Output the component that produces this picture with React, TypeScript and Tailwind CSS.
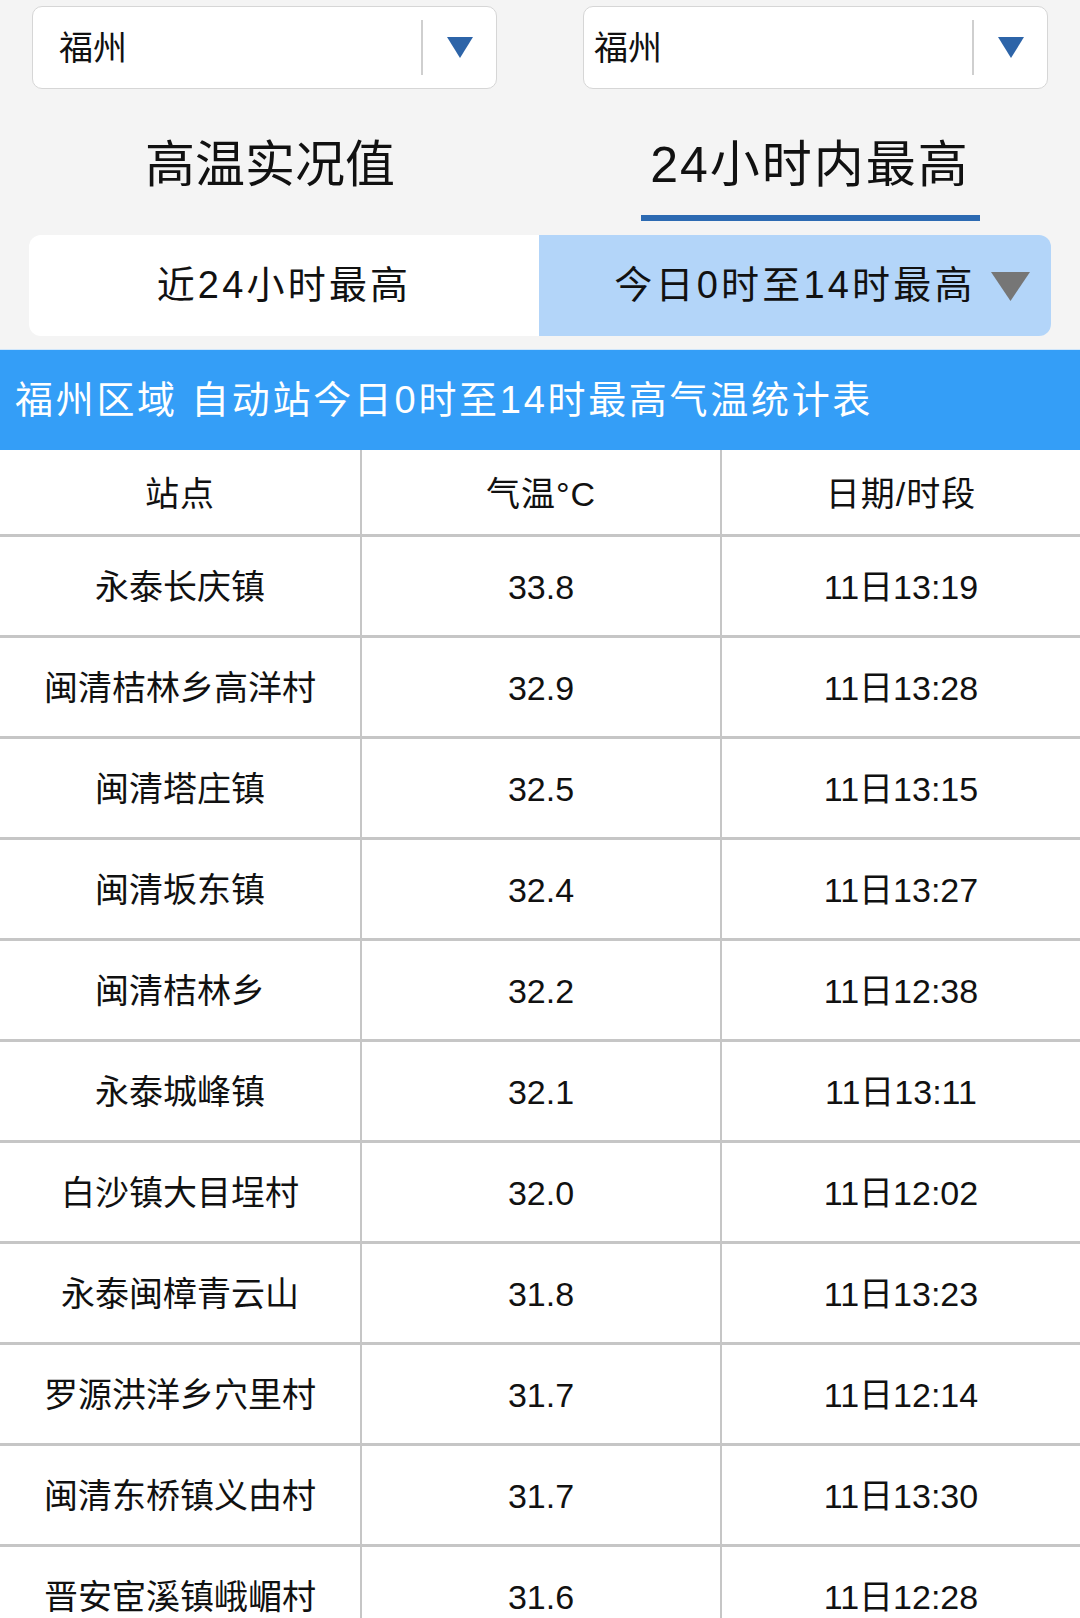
const rows: [string, string, string][] = [
  ["永泰长庆镇", "33.8", "11日13:19"],
  ["闽清桔林乡高洋村", "32.9", "11日13:28"],
  ["闽清塔庄镇", "32.5", "11日13:15"],
  ["闽清坂东镇", "32.4", "11日13:27"],
  ["闽清桔林乡", "32.2", "11日12:38"],
  ["永泰城峰镇", "32.1", "11日13:11"],
  ["白沙镇大目埕村", "32.0", "11日12:02"],
  ["永泰闽樟青云山", "31.8", "11日13:23"],
  ["罗源洪洋乡穴里村", "31.7", "11日12:14"],
  ["闽清东桥镇义由村", "31.7", "11日13:30"],
  ["晋安宦溪镇峨嵋村", "31.6", "11日12:28"],
];

function CitySelect({ pad }: { pad: string }) {
  return (
    <div className="flex h-[83px] w-[465px] items-center rounded-[10px] border border-[#d6d6d6] bg-white">
      <div className={["flex-1 text-[34px] leading-none text-[#111]", pad].join(" ")}>福州</div>
      <div className="h-[55px] w-[2px] bg-[#cfcfcf]" />
      <div className="flex w-[73px] items-center justify-center">
        <svg width="26" height="21" viewBox="0 0 26 21">
          <polygon points="0,0 26,0 13,21" fill="#2d64a8" />
        </svg>
      </div>
    </div>
  );
}

export default function App() {
  return (
    <div
      className="min-h-[1618px] w-[1080px] overflow-hidden bg-[#f4f4f4] text-[#111]"
      style={{ fontFamily: '"Liberation Sans", "Noto Sans CJK SC", sans-serif' }}
    >
      {/* 城市选择 */}
      <div className="flex justify-between px-[32px] pt-[6px]">
        <CitySelect pad="pl-[26px]" />
        <CitySelect pad="pl-[10px]" />
      </div>

      {/* 标签 */}
      <div className="flex h-[146px]">
        <div className="flex w-1/2 flex-col items-center pt-[51px]">
          <div className="text-[50px] leading-[50px]">高温实况值</div>
        </div>
        <div className="flex w-1/2 flex-col items-center pt-[51px]">
          <div className="text-[50px] leading-[50px] tracking-[2px]">24小时内最高</div>
          <div className="mt-[25px] h-[6px] w-[339px] bg-[#2c6ab2]" />
        </div>
      </div>

      {/* 分段切换 */}
      <div className="mx-[29px] flex h-[101px] w-[1022px] overflow-hidden rounded-[12px] text-[38px] tracking-[3.2px]">
        <div className="flex w-[510px] items-center justify-center bg-white">近24小时最高</div>
        <div className="relative flex flex-1 items-center justify-center bg-[#b3d5f9]">
          今日0时至14时最高
          <svg
            className="absolute right-[21px] top-[37px]"
            width="39"
            height="29"
            viewBox="0 0 39 29"
          >
            <polygon points="0,0 39,0 19.5,29" fill="#767676" />
          </svg>
        </div>
      </div>

      {/* 统计表 */}
      <div className="mt-[13px] border-t border-[#cfe6fb] bg-white">
        <div className="flex h-[100px] items-center bg-[#349ef7] pl-[15px] text-[38px] tracking-[2.7px] text-white">
          福州区域 自动站今日0时至14时最高气温统计表
        </div>
        <div className="grid h-[87px] grid-cols-[360px_2px_358px_2px_358px] border-b-[3px] border-[#c6c6c6] text-[34px] tracking-[1px]">
          <div className="flex items-center justify-center pt-[4px]">站点</div>
          <div className="bg-[#c6c6c6]" />
          <div className="flex items-center justify-center pt-[4px]">气温°C</div>
          <div className="bg-[#c6c6c6]" />
          <div className="flex items-center justify-center pt-[4px]">日期/时段</div>
        </div>
        {rows.map(([name, temp, time], i) => (
          <div
            key={i}
            className="grid h-[101px] grid-cols-[360px_2px_358px_2px_358px] border-b-[3px] border-[#c6c6c6] text-[34px]"
          >
            <div className="flex items-center justify-center pt-[2px]">{name}</div>
            <div className="bg-[#c6c6c6]" />
            <div className="flex items-center justify-center pt-[2px]">{temp}</div>
            <div className="bg-[#c6c6c6]" />
            <div className="flex items-center justify-center pt-[2px]">{time}</div>
          </div>
        ))}
      </div>
    </div>
  );
}
